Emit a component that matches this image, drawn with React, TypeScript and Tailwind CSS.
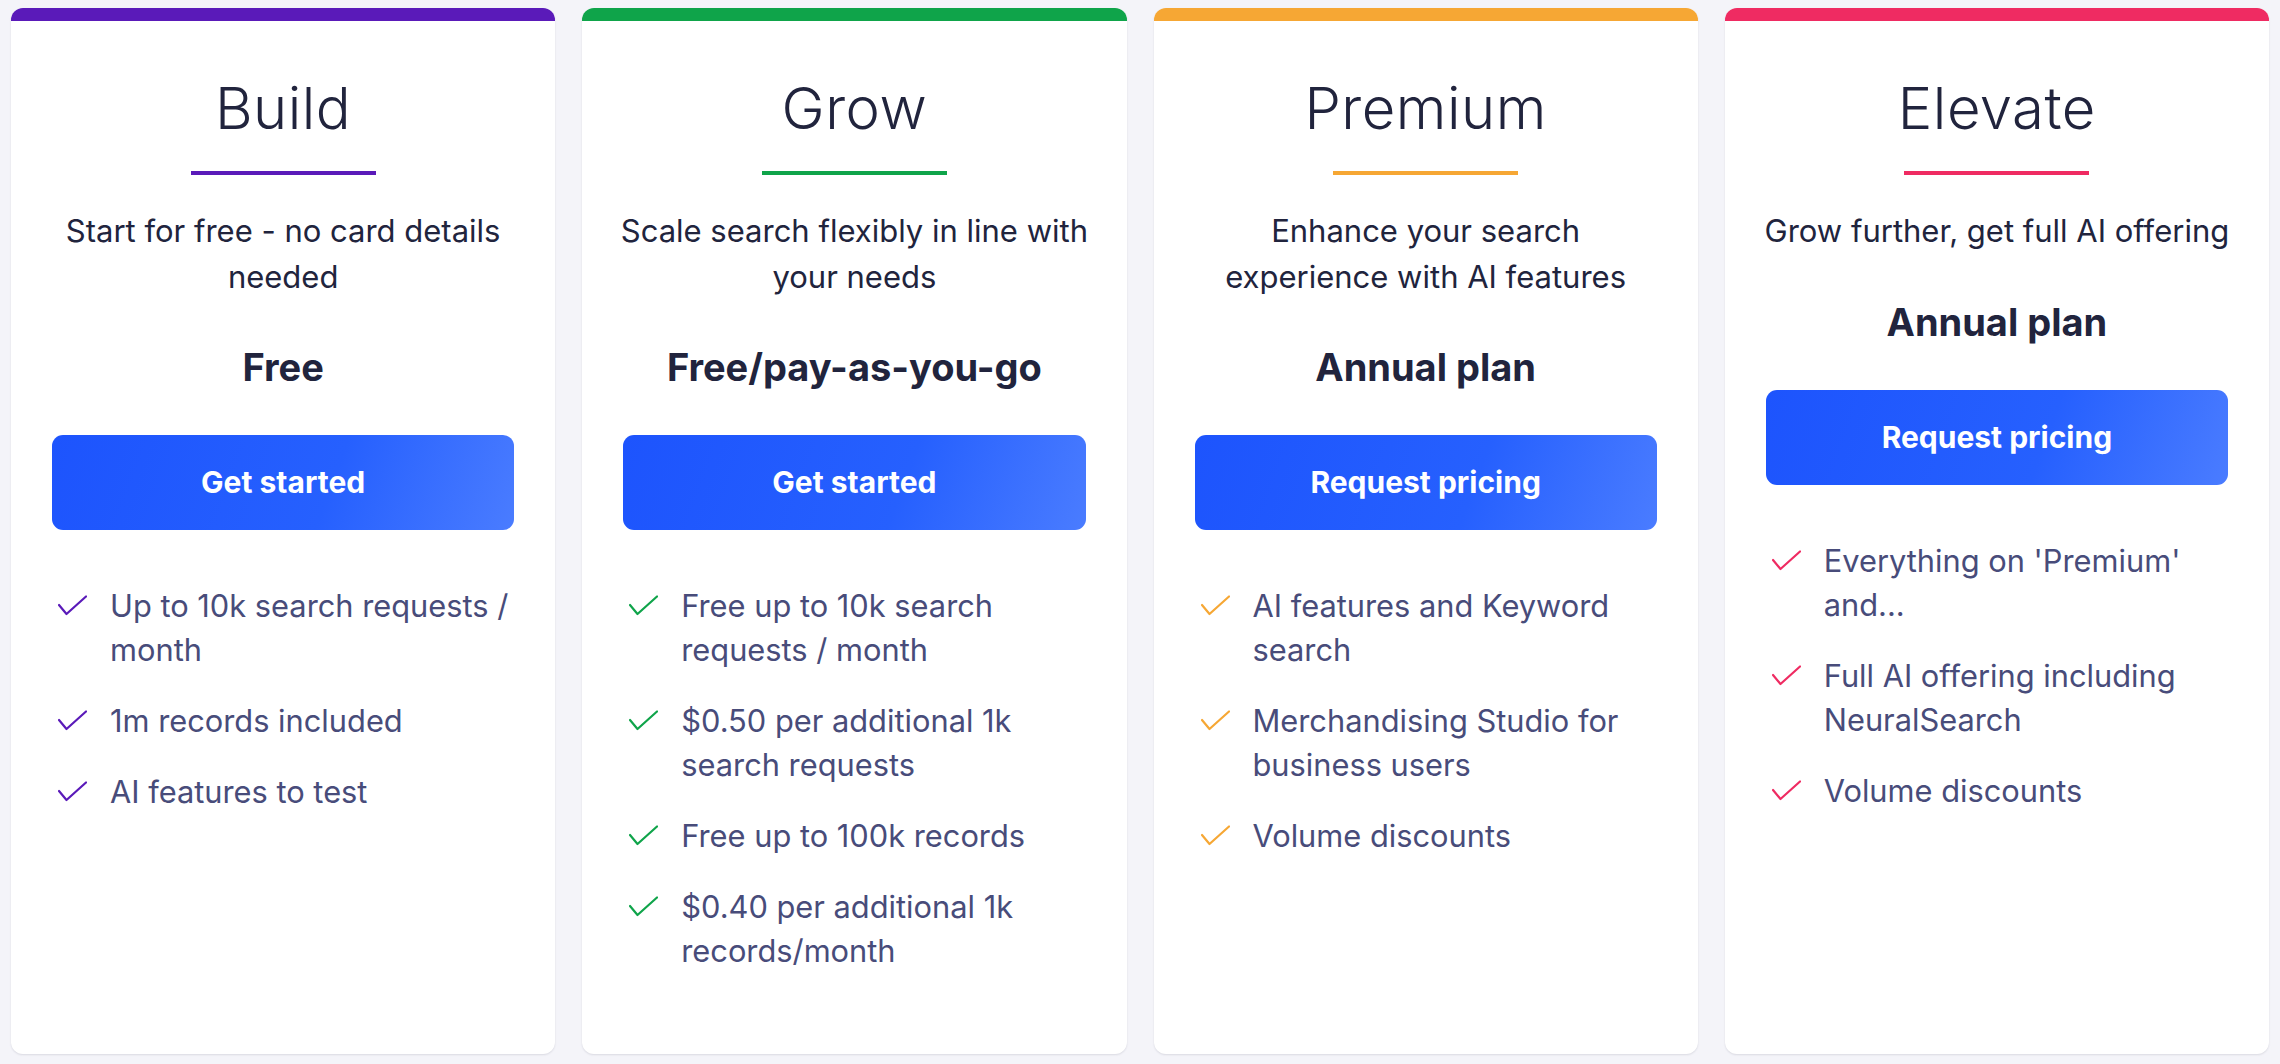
const plans = [
  {
    name: 'Build',
    color: '#5a1ab9',
    desc: ['Start for free - no card details', 'needed'],
    price: 'Free',
    cta: 'Get started',
    features: ['Up to 10k search requests / month', '1m records included', 'AI features to test'],
  },
  {
    name: 'Grow',
    color: '#0fa44a',
    desc: ['Scale search flexibly in line with', 'your needs'],
    price: 'Free/pay-as-you-go',
    cta: 'Get started',
    features: [
      'Free up to 10k search requests / month',
      '$0.50 per additional 1k search requests',
      'Free up to 100k records',
      '$0.40 per additional 1k records/month',
    ],
  },
  {
    name: 'Premium',
    color: '#f6a734',
    desc: ['Enhance your search', 'experience with AI features'],
    price: 'Annual plan',
    cta: 'Request pricing',
    features: ['AI features and Keyword search', 'Merchandising Studio for business users', 'Volume discounts'],
  },
  {
    name: 'Elevate',
    color: '#ef2b62',
    desc: ['Grow further, get full AI offering'],
    price: 'Annual plan',
    cta: 'Request pricing',
    features: ["Everything on 'Premium' and...", 'Full AI offering including NeuralSearch', 'Volume discounts'],
  },
]

function Check({ color }: { color: string }) {
  return (
    <svg width="29" height="21" viewBox="0 0 29 21" fill="none" className="mt-[11px] shrink-0">
      <path d="M1 10 L8.5 19 L28 1.5" stroke={color} strokeWidth="2.2" strokeLinecap="round" strokeLinejoin="round" />
    </svg>
  )
}

export default function App() {
  return (
    <div className="flex h-[1064px] gap-[27px] bg-[#f4f4f9] px-[11px] pt-[8px] pb-[10px] font-['Inter',sans-serif] text-[#21243d]">
      {plans.map((p) => (
        <div
          key={p.name}
          className="flex flex-1 flex-col overflow-hidden rounded-[12px] bg-white shadow-[0_1px_2px_rgba(33,36,61,0.12)]"
        >
          <div className="h-[13px] shrink-0" style={{ backgroundColor: p.color }} />
          <div className="flex flex-col items-center px-[41px]">
            <h2 className="mt-[58px] text-[58px] leading-none font-light tracking-[0.5px]">{p.name}</h2>
            <div className="mt-[34px] h-[4px] w-[185px]" style={{ backgroundColor: p.color }} />
            <p className="mt-[33px] text-center text-[31px] leading-[45.5px]">
              {p.desc.map((line, i) => (
                <span key={i} className="block whitespace-nowrap">
                  {line}
                </span>
              ))}
            </p>
            <div className="mt-[46px] text-[38px] leading-[45px] font-bold">{p.price}</div>
            <button className="mt-[45px] flex h-[95px] w-full items-center justify-center rounded-[11px] bg-[linear-gradient(110deg,#1d54fd_0%,#2660fe_60%,#4a7cff_100%)] text-[30px] font-bold text-white">
              {p.cta}
            </button>
          </div>
          <ul className="mt-[54px] flex flex-col gap-[27px] pr-[30px] pl-[47px]">
            {p.features.map((f) => (
              <li key={f} className="flex items-start gap-[23px]">
                <Check color={p.color} />
                <span className="text-[30.8px] leading-[44px] text-[#484c7a]">{f}</span>
              </li>
            ))}
          </ul>
        </div>
      ))}
    </div>
  )
}
